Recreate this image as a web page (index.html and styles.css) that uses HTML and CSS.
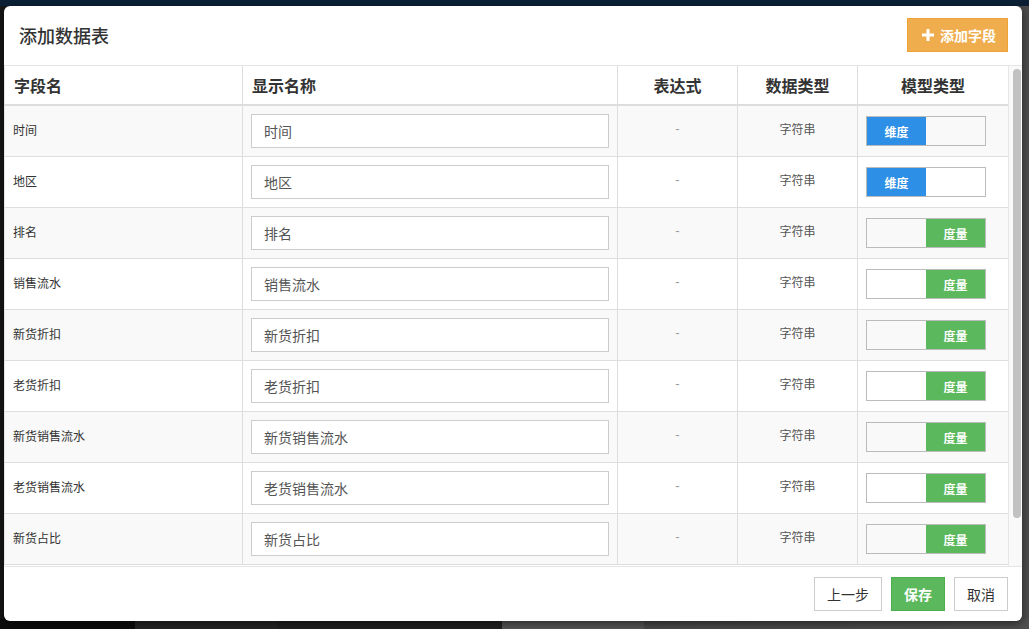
FILE: index.html
```html
<!DOCTYPE html>
<html lang="zh-CN">
<head>
<meta charset="utf-8">
<title>添加数据表</title>
<link rel="stylesheet" href="styles.css">
</head>
<body>
<div class="modal">
  <div class="modal-header">
    <h4 class="modal-title">添加数据表</h4>
    <button class="btn btn-warning"><svg class="plus" viewBox="0 0 12 12" width="12" height="12"><path d="M4.5 0h3v4.5H12v3H7.5V12h-3V7.5H0v-3h4.5z" fill="#fff"/></svg>添加字段</button>
  </div>
  <div class="modal-body">
    <div class="table-wrap">
    <table class="grid">
      <colgroup>
        <col class="c1"><col class="c2"><col class="c3"><col class="c4"><col class="c5">
      </colgroup>
      <thead>
        <tr><th class="left">字段名</th><th class="left">显示名称</th><th>表达式</th><th>数据类型</th><th>模型类型</th></tr>
      </thead>
      <tbody>
        <tr><td class="name">时间</td><td><input class="field" value="时间"></td><td class="dash">-</td><td class="type">字符串</td><td><div class="toggle"><span class="on dim">维度</span><span></span></div></td></tr>
        <tr><td class="name">地区</td><td><input class="field" value="地区"></td><td class="dash">-</td><td class="type">字符串</td><td><div class="toggle"><span class="on dim">维度</span><span></span></div></td></tr>
        <tr><td class="name">排名</td><td><input class="field" value="排名"></td><td class="dash">-</td><td class="type">字符串</td><td><div class="toggle"><span></span><span class="on mea">度量</span></div></td></tr>
        <tr><td class="name">销售流水</td><td><input class="field" value="销售流水"></td><td class="dash">-</td><td class="type">字符串</td><td><div class="toggle"><span></span><span class="on mea">度量</span></div></td></tr>
        <tr><td class="name">新货折扣</td><td><input class="field" value="新货折扣"></td><td class="dash">-</td><td class="type">字符串</td><td><div class="toggle"><span></span><span class="on mea">度量</span></div></td></tr>
        <tr><td class="name">老货折扣</td><td><input class="field" value="老货折扣"></td><td class="dash">-</td><td class="type">字符串</td><td><div class="toggle"><span></span><span class="on mea">度量</span></div></td></tr>
        <tr><td class="name">新货销售流水</td><td><input class="field" value="新货销售流水"></td><td class="dash">-</td><td class="type">字符串</td><td><div class="toggle"><span></span><span class="on mea">度量</span></div></td></tr>
        <tr><td class="name">老货销售流水</td><td><input class="field" value="老货销售流水"></td><td class="dash">-</td><td class="type">字符串</td><td><div class="toggle"><span></span><span class="on mea">度量</span></div></td></tr>
        <tr><td class="name">新货占比</td><td><input class="field" value="新货占比"></td><td class="dash">-</td><td class="type">字符串</td><td><div class="toggle"><span></span><span class="on mea">度量</span></div></td></tr>
      </tbody>
    </table>
    </div>
    <div class="scrollbar"><div class="thumb"></div></div>
  </div>
  <div class="modal-footer">
    <button class="btn btn-default">上一步</button>
    <button class="btn btn-success">保存</button>
    <button class="btn btn-default">取消</button>
  </div>
</div>
</body>
</html>
```
FILE: styles.css
```css
* { box-sizing: border-box; }
html, body { height: 100%; }
body {
  margin: 0;
  overflow: hidden;
  font-family: "Liberation Sans", "Noto Sans CJK SC", sans-serif;
  color: #333;
  background:
    linear-gradient(to bottom, #0b2035 0, #0b2035 6px, transparent 6px) top left / 100% 100% no-repeat,
    linear-gradient(to right, #0c0c0c 0, #0c0c0c 135px, #262626 135px, #262626 277px, #222 277px, #222 502px, #575757 502px, #575757 644px, #4a4a4a 644px, #505050 100%) bottom left / 100% 10px no-repeat,
    linear-gradient(to right, #151515 0, #151515 50%, #4b4b4b 50%, #4b4b4b 100%);
}
.modal {
  width: 1018px;
  height: 615px;
  margin: 6px 0 0 4px;
  background: #fff;
  border-radius: 6px;
  overflow: hidden;
  display: flex;
  flex-direction: column;
  box-shadow: 0 3px 9px rgba(0,0,0,0.5);
}
.modal-header {
  height: 60px;
  flex: none;
  display: flex;
  align-items: center;
  justify-content: space-between;
  padding: 0 14px 1px 15px;
  border-bottom: 1px solid #e5e5e5;
}
.modal-title {
  margin: 0;
  font-size: 18px;
  font-weight: 500;
  color: #333;
  font-family: "Noto Sans CJK SC", sans-serif;
}
.btn {
  font-family: "Noto Sans CJK SC", sans-serif;
  font-size: 14px;
  height: 34px;
  padding: 0 12px;
  border: 1px solid transparent;
  border-radius: 0;
  line-height: 32px;
  display: inline-flex;
  align-items: center;
  cursor: pointer;
}
.btn-warning {
  background: #f0ad4e;
  border-color: #eea236;
  color: #fff;
  font-weight: bold;
  width: 101px;
  padding: 0 0 0 14px;
}
.plus { margin-right: 6px; }
.modal-body {
  height: 500px;
  flex: none;
  display: flex;
  overflow: hidden;
}
.table-wrap {
  width: 1004px;
  flex: none;
  overflow: hidden;
}
.scrollbar {
  flex: 1;
  background: #f9f9f9;
  border-left: 1px solid #e6e6e6;
  padding: 3px 1px 0 4px;
}
.thumb {
  height: 449px;
  background: #c1c1c1;
  border-radius: 4px;
}
.grid {
  width: 1004px;
  border-collapse: collapse;
  table-layout: fixed;
  font-family: "Noto Sans CJK SC", sans-serif;
}
.c1 { width: 238px; }
.c2 { width: 375px; }
.c3 { width: 120px; }
.c4 { width: 120px; }
.c5 { width: 151px; }
.grid th, .grid td {
  border: 1px solid #ddd;
}
.grid thead tr th { border-top: none; }
.grid tr > :first-child { border-left: 1px solid #e4e4e4; }
.grid th {
  font-size: 16px;
  font-weight: bold;
  color: #333;
  line-height: 22px;
  padding: 8px 8px;
  text-align: center;
  border-bottom: 2px solid #ddd;
}
.grid th.left { text-align: left; padding-left: 9px; }
.grid td {
  padding: 8px;
  vertical-align: top;
  font-size: 12px;
}
.grid tbody tr:nth-child(odd) td { background: #f9f9f9; }
.grid tbody tr:nth-child(even) td { background: #fff; }
td.name { color: #333; line-height: 32px; }
td.dash { color: #999; text-align: center; line-height: 30px; font-family: "Liberation Sans", sans-serif; font-size: 13px; }
td.type { color: #555; text-align: center; line-height: 30px; }
.field {
  display: block;
  width: 100%;
  height: 34px;
  border: 1px solid #ccc;
  border-radius: 0;
  padding: 0 12px;
  font-family: "Noto Sans CJK SC", sans-serif;
  font-size: 14px;
  color: #555;
  background: #fff;
  outline: none;
}
.toggle {
  display: flex;
  width: 120px;
  height: 30px;
  margin-top: 2px;
  border: 1px solid #bbb;
}
.toggle span {
  flex: 1;
  display: flex;
  align-items: center;
  justify-content: center;
  font-size: 12px;
  font-weight: bold;
  color: #fff;
}
.toggle .dim { background: #2d8fe6; }
.toggle .mea { background: #5cb85c; }
.modal-footer {
  flex: none;
  height: 55px;
  border-top: 1px solid #e5e5e5;
  display: flex;
  justify-content: flex-end;
  align-items: flex-start;
  gap: 9px;
  padding: 10px 14px 0 0;
}
.btn-default {
  background: #fff;
  border-color: #ccc;
  color: #333;
}
.btn-success {
  background: #5cb85c;
  border-color: #4cae4c;
  color: #fff;
  font-weight: bold;
}
```
